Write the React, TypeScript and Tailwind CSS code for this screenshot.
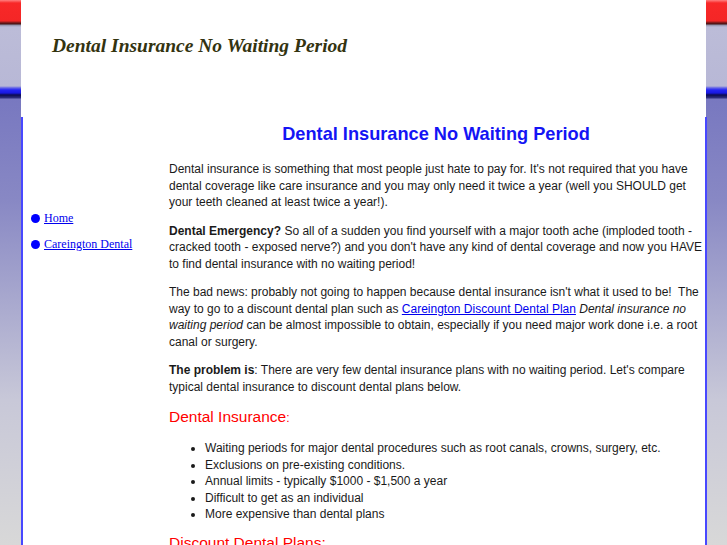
import React from "react";

const sans = "font-['Liberation_Sans','Arial',sans-serif]";
const serif = "font-['Liberation_Serif','Times_New_Roman',serif]";

function NavItem({ label }: { label: string }) {
  return (
    <li className="flex items-center gap-[4px] h-[26px]">
      <span className="w-[9px] h-[9px] rounded-full bg-[#0000ff] shrink-0" />
      <a href="#" className={`${serif} text-[12px] text-[#0000ee] underline`}>
        {label}
      </a>
    </li>
  );
}

export default function App() {
  const bullets = [
    "Waiting periods for major dental procedures such as root canals, crowns, surgery, etc.",
    "Exclusions on pre-existing conditions.",
    "Annual limits - typically $1000 - $1,500 a year",
    "Difficult to get as an individual",
    "More expensive than dental plans",
  ];
  return (
    <div className="min-h-[545px] h-[545px] overflow-hidden bg-[linear-gradient(to_bottom,#ff8080_0px,#f82828_3px,#f42626_21px,#a02020_22px,#401010_24px,#9090a8_25px,#bcbcd8_27px,#b8b8d6_86px,#6060e8_88px,#2424f4_90px,#1818e0_93px,#0c0c50_95px,#303080_98px,#7878c0_99px,#8888c4_200px,#c8c8d8_400px,#d8d8d8_545px)]">
      <div className="w-[685px] ml-[21px] bg-white h-full flex flex-col">
        <header className="h-[117px] pl-[31px] pt-[35px] shrink-0">
          <h1 className={`${serif} italic font-bold text-[19.5px] leading-[22px] text-[#333310]`}>
            Dental Insurance No Waiting Period
          </h1>
        </header>
        <div className="flex flex-1 border-l-2 border-r-2 border-[#4848ff] -mr-[1px]">
          <nav className="w-[146px] shrink-0 pt-[88px] pl-[8px]">
            <ul>
              <NavItem label="Home" />
              <NavItem label="Careington Dental" />
            </ul>
          </nav>
          <main className={`${sans} flex-1 pr-[2px] text-[12px] leading-[16.5px] text-[#1a1a1a]`}>
            <h2 className="text-center font-bold text-[18.2px] leading-[22px] text-[#1414f4] mt-[6px] mb-[16px]">
              Dental Insurance No Waiting Period
            </h2>
            <p className="mb-[12px]">
              Dental insurance is something that most people just hate to pay for. It's not required that you have dental coverage like care insurance and you may only need it twice a year (well you SHOULD get your teeth cleaned at least twice a year!).
            </p>
            <p className="mb-[12px]">
              <b>Dental Emergency?</b> So all of a sudden you find yourself with a major tooth ache (imploded tooth - cracked tooth - exposed nerve?) and you don't have any kind of dental coverage and now you HAVE to find dental insurance with no waiting period!
            </p>
            <p className="mb-[12px]">
              The bad news: probably not going to happen because dental insurance isn't what it used to be!&nbsp; The way to go to a discount dental plan such as{" "}
              <a href="#" className="text-[#0000ee] underline">Careington Discount Dental Plan</a>{" "}
              <i>Dental insurance no waiting period</i> can be almost impossible to obtain, especially if you need major work done i.e. a root canal or surgery.
            </p>
            <p className="mb-[12px]">
              <b>The problem is</b>: There are very few dental insurance plans with no waiting period. Let's compare typical dental insurance to discount dental plans below.
            </p>
            <h3 className="text-[#ff0000] text-[15.5px] leading-[20px] mt-[12px] mb-[12px]">
              Dental Insurance<span className="text-[12px]">:</span>
            </h3>
            <ul className="list-disc pl-[36px] mb-0">
              {bullets.map((b) => (
                <li key={b}>{b}</li>
              ))}
            </ul>
            <h3 className="text-[#ff0000] text-[15.5px] leading-[20px] mt-[10px]">
              Discount Dental Plans:
            </h3>
          </main>
        </div>
      </div>
    </div>
  );
}
